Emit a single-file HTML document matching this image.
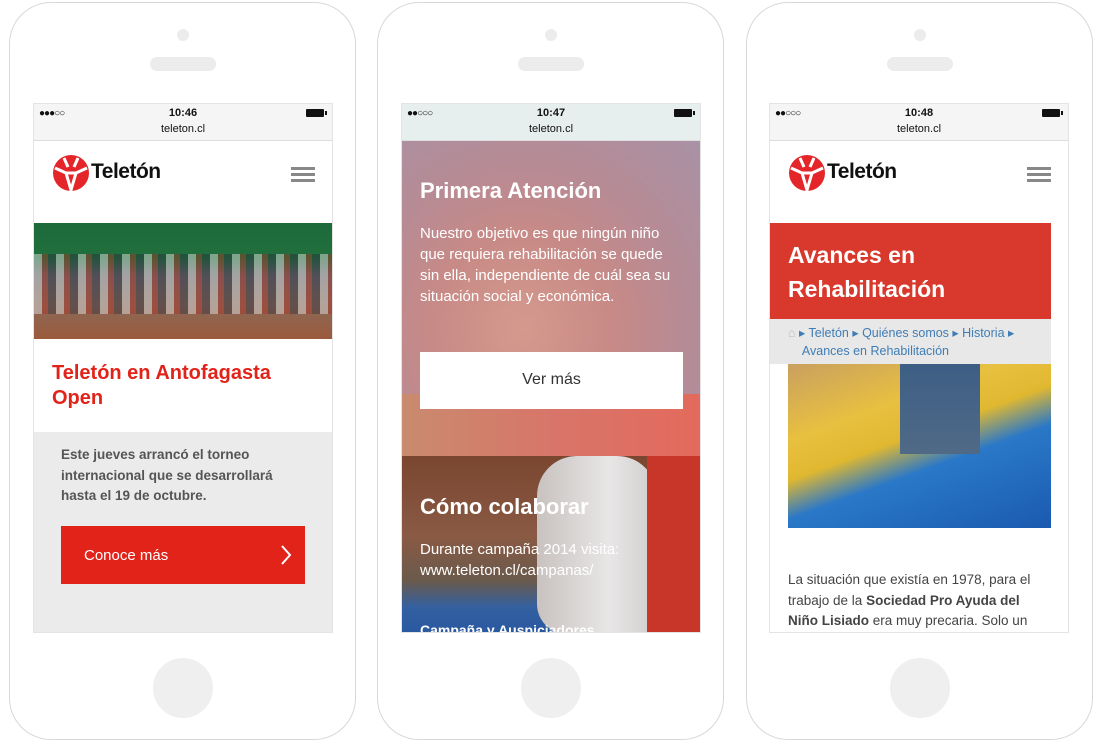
<!DOCTYPE html>
<html><head><meta charset="utf-8"><style>
*{margin:0;padding:0;box-sizing:border-box}
body{width:1101px;height:742px;background:#fff;position:relative;overflow:hidden;font-family:"Liberation Sans",sans-serif}
.a{position:absolute}
.phone{position:absolute;top:2px;width:347px;height:738px;border:1.5px solid #d8d8d8;border-radius:42px;background:#fff}
.cam{position:absolute;left:167px;top:26px;width:12px;height:12px;border-radius:50%;background:#ececec}
.spk{position:absolute;left:140px;top:54px;width:66px;height:14px;border-radius:7px;background:#ececec}
.home{position:absolute;left:143px;top:655px;width:60px;height:60px;border-radius:50%;background:#efefef}
.screen{position:absolute;top:103px;width:300px;height:530px;overflow:hidden;background:#fff;border:1px solid #e4e4e4}
.sb{position:absolute;left:0;top:0;width:100%;height:37px;background:#f5f5f5;border-bottom:1px solid #ddd;font-size:11px;color:#111;text-align:center}
.sb .t{position:absolute;top:3px;width:100%;font-weight:bold;font-size:11px}
.sb .u{position:absolute;top:19px;width:100%;font-size:11px}
.dots{position:absolute;left:5px;top:4px;font-size:10px;letter-spacing:-1px}
.bat{position:absolute;right:8px;top:5px;width:18px;height:8px;background:#111;border-radius:1px}
.bat:after{content:"";position:absolute;right:-3px;top:2px;width:2px;height:4px;background:#111}
.ham{position:absolute;width:24px;height:3px;background:#888;box-shadow:0 6px 0 #888,0 12px 0 #888}
.logo{position:absolute;font-weight:bold;font-size:21px;color:#111;letter-spacing:-0.5px}
.w{color:#fff}
</style></head><body>

<!-- Phone 1 -->
<div class="phone" style="left:9px"><div class="cam"></div><div class="spk"></div><div class="home"></div></div>
<div class="screen" style="left:33px">
 <div class="sb"><span class="dots">●●●○○</span><div class="t">10:46</div><div class="u">teleton.cl</div><div class="bat"></div></div>
 <svg class="a" style="left:18px;top:50px" width="38" height="38" viewBox="0 0 38 38"><circle cx="19" cy="19" r="18" fill="#e4262a"/><path d="M3 14 L14 19 L19 36 L24 19 L35 14 M12 4 L16 13 M26 4 L22 13 M14 19 L24 19" stroke="#fff" stroke-width="3" fill="none"/></svg>
 <div class="logo" style="left:57px;top:56px">Teletón</div>
 <div class="ham" style="left:257px;top:63px"></div>
 <div class="a" style="left:0;top:119px;width:300px;height:116px;background:linear-gradient(180deg,#1d6a3a 0%,#226f3e 30%,#6b6a6a 45%,#8a6a58 70%,#9b5a3c 100%)"></div>
 <div class="a" style="left:0;top:150px;width:300px;height:60px;background:repeating-linear-gradient(90deg,rgba(220,220,220,.5) 0 8px,rgba(180,40,30,.4) 8px 14px,rgba(40,40,60,.4) 14px 22px)"></div>
 <div class="a" style="left:18px;top:257px;font-size:20px;font-weight:bold;color:#e2231a;line-height:25px;width:260px">Teletón en Antofagasta Open</div>
 <div class="a" style="left:0;top:328px;width:300px;height:202px;background:#ebebeb"></div>
 <div class="a" style="left:27px;top:341px;font-size:13.5px;font-weight:bold;color:#555;line-height:20.5px;width:250px">Este jueves arrancó el torneo internacional que se desarrollará hasta el 19 de octubre.</div>
 <div class="a" style="left:27px;top:422px;width:244px;height:58px;background:#e2231a"></div>
 <div class="a w" style="left:50px;top:443px;font-size:15px">Conoce más</div>
 <svg class="a" style="left:246px;top:440px" width="12" height="22"><path d="M2 2 L10 11 L2 20" stroke="#fff" stroke-width="2" fill="none"/></svg>
</div>

<!-- Phone 2 -->
<div class="phone" style="left:377px"><div class="cam"></div><div class="spk"></div><div class="home"></div></div>
<div class="screen" style="left:401px">
 <div class="sb" style="background:#e6eeee"><span class="dots">●●○○○</span><div class="t">10:47</div><div class="u">teleton.cl</div><div class="bat"></div></div>
 <div class="a" style="left:0;top:37px;width:300px;height:315px;background:radial-gradient(ellipse at 40% 60%,#d59a8e 0%,#c88a86 35%,#b58b96 65%,#a892a6 100%)"></div>
 <div class="a" style="left:0;top:290px;width:300px;height:62px;background:linear-gradient(90deg,#c98b6e,#d8756a 50%,#e36a5c)"></div>
 <div class="a w" style="left:18px;top:74px;font-size:22px;font-weight:bold">Primera Atención</div>
 <div class="a w" style="left:18px;top:119px;font-size:15px;line-height:21px;width:262px">Nuestro objetivo es que ningún niño que requiera rehabilitación se quede sin ella, independiente de cuál sea su situación social y económica.</div>
 <div class="a" style="left:18px;top:248px;width:263px;height:57px;background:#fff"></div>
 <div class="a" style="left:18px;top:267px;width:263px;text-align:center;font-size:16px;color:#333">Ver más</div>
 <div class="a" style="left:0;top:352px;width:300px;height:178px;background:linear-gradient(180deg,#7a4630 0%,#8a5a44 45%,#6a5a4c 70%,#3360a0 85%,#2a58a0 100%)"></div>
 <div class="a" style="left:135px;top:352px;width:120px;height:178px;background:linear-gradient(90deg,#c8c2c0,#e8e6e6 60%,#d0cccc);border-radius:40px 40px 0 30px"></div>
 <div class="a" style="left:245px;top:352px;width:55px;height:178px;background:#c8362a"></div>
 <div class="a w" style="left:18px;top:390px;font-size:22px;font-weight:bold">Cómo colaborar</div>
 <div class="a w" style="left:18px;top:435px;font-size:15px;line-height:21px">Durante campaña 2014 visita:<br>www.teleton.cl/campanas/</div>
 <div class="a w" style="left:18px;top:518px;font-size:14px;font-weight:bold">Campaña y Auspiciadores</div>
</div>

<!-- Phone 3 -->
<div class="phone" style="left:746px"><div class="cam"></div><div class="spk"></div><div class="home"></div></div>
<div class="screen" style="left:769px">
 <div class="sb"><span class="dots">●●○○○</span><div class="t">10:48</div><div class="u">teleton.cl</div><div class="bat"></div></div>
 <svg class="a" style="left:18px;top:50px" width="38" height="38" viewBox="0 0 38 38"><circle cx="19" cy="19" r="18" fill="#e4262a"/><path d="M3 14 L14 19 L19 36 L24 19 L35 14 M12 4 L16 13 M26 4 L22 13 M14 19 L24 19" stroke="#fff" stroke-width="3" fill="none"/></svg>
 <div class="logo" style="left:57px;top:56px">Teletón</div>
 <div class="ham" style="left:257px;top:63px"></div>
 <div class="a" style="left:0;top:119px;width:281px;height:96px;background:#d9392c"></div>
 <div class="a w" style="left:18px;top:134px;font-size:23px;font-weight:bold;line-height:34px">Avances en<br>Rehabilitación</div>
 <div class="a" style="left:0;top:215px;width:281px;height:45px;background:#e8e8e8"></div>
 <div class="a" style="left:18px;top:220px;font-size:12.5px;color:#3f7db5;line-height:18px;width:260px"><span style="color:#bbb">⌂</span> ▸ Teletón ▸ Quiénes somos ▸ Historia ▸<br>&nbsp;&nbsp;&nbsp;&nbsp;Avances en Rehabilitación</div>
 <div class="a" style="left:18px;top:260px;width:263px;height:164px;background:linear-gradient(160deg,#c9a060 0%,#e8c040 30%,#e0b830 45%,#2a78c8 60%,#1a5ab0 100%)"></div>
 <div class="a" style="left:130px;top:260px;width:80px;height:90px;background:linear-gradient(180deg,#3d5e85,#506a86)"></div>
 <div class="a" style="left:18px;top:466px;font-size:13.5px;color:#444;line-height:20.5px;width:265px">La situación que existía en 1978, para el trabajo de la <b>Sociedad Pro Ayuda del Niño Lisiado</b> era muy precaria. Solo un</div>
</div>
</body></html>
